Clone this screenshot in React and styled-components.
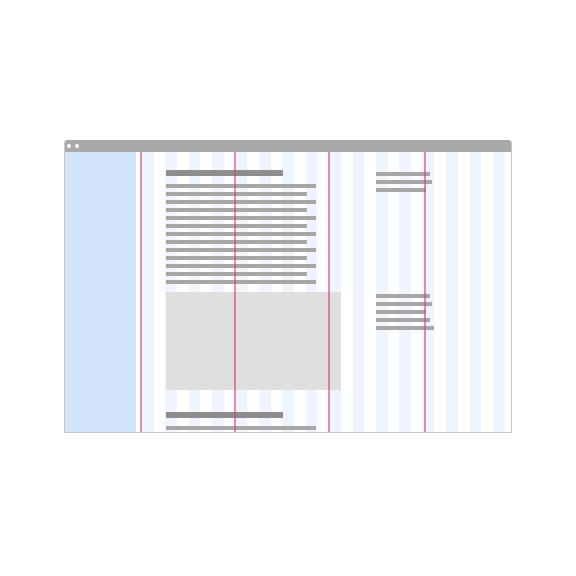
import React from 'react'
import styled, { createGlobalStyle } from 'styled-components'

const COL = 11.7

const GlobalStyle = createGlobalStyle`
html, body {
  margin: 0;
  padding: 0;
  background: #ffffff;
  font-family: "Liberation Sans", Arial, sans-serif;
}
`

const Page = styled.div`
width: 576px;
height: 576px;
display: flex;
justify-content: center;
padding-top: 140px;
box-sizing: border-box;
`

const Window = styled.div`
width: 448px;
height: 293px;
display: flex;
flex-direction: column;
border: 1px solid #c9c9c9;
border-top: none;
border-radius: 3px 3px 0 0;
box-sizing: border-box;
overflow: hidden;
`

const TitleBar = styled.div`
height: 12px;
flex: none;
background: #a9a9a9;
display: flex;
align-items: center;
gap: 4px;
padding-left: 3px;
margin: 0 -1px;
border-radius: 3px 3px 0 0;
`

const Dot = styled.span`
width: 4px;
height: 4px;
border-radius: 50%;
background: #ffffff;
`

const Body = styled.div`
flex: 1;
display: flex;
min-height: 0;
`

const Sidebar = styled.div`
width: 71px;
flex: none;
background: #d2e3fc;
`

const Canvas = styled.div`
position: relative;
flex: 1;
overflow: hidden;
background-image: repeating-linear-gradient(
  90deg,
  #eef5ff 0,
  #eef5ff ${COL}px,
  transparent ${COL}px,
  transparent ${COL * 2}px
);
background-position: 6px 0;
`

const Guides = styled.div`
position: absolute;
inset: 0 0 0 4px;
display: flex;
pointer-events: none;
`

const Guide = styled.div`
width: ${p => p.$w}px;
flex: none;
border-left: 2px solid rgba(214, 60, 130, 0.6);
box-sizing: border-box;
`

const Content = styled.div`
display: flex;
padding-left: 30px;
gap: 36px;
`

const Main = styled.div`
width: 174px;
padding-top: 18px;
display: flex;
flex-direction: column;
`

const Side = styled.div`
padding-top: 20px;
display: flex;
flex-direction: column;
`

const Heading = styled.div`
width: 117px;
height: 6px;
background: #8d8d8d;
margin-top: ${p => p.$top || 0}px;
`

const Lines = styled.div`
display: flex;
flex-direction: column;
gap: 4px;
margin-top: ${p => p.$top || 0}px;
`

const Line = styled.div`
width: ${p => p.$w}px;
height: 4px;
background: #a7a7a7;
`

const Picture = styled.div`
width: 175px;
height: 98px;
background: #dfdfdf;
margin-top: 8px;
`

const textLines = Array.from({ length: 13 }, (_, i) => (i % 2 === 0 ? 150 : 141))

export default function App() {
  return (
    <Page>
      <GlobalStyle />
      <Window>
        <TitleBar>
          <Dot />
          <Dot />
        </TitleBar>
        <Body>
          <Sidebar />
          <Canvas>
            <Content>
              <Main>
                <Heading />
                <Lines $top={8}>
                  {textLines.map((w, i) => (
                    <Line key={i} $w={w} />
                  ))}
                </Lines>
                <Picture />
                <Heading $top={22} />
                <Lines $top={8}>
                  <Line $w={150} />
                </Lines>
              </Main>
              <Side>
                <Lines>
                  <Line $w={54} />
                  <Line $w={56} />
                  <Line $w={50} />
                </Lines>
                <Lines $top={102}>
                  <Line $w={54} />
                  <Line $w={56} />
                  <Line $w={50} />
                  <Line $w={54} />
                  <Line $w={58} />
                </Lines>
              </Side>
            </Content>
            <Guides>
              <Guide $w={94} />
              <Guide $w={94} />
              <Guide $w={96} />
              <Guide $w={60} />
            </Guides>
          </Canvas>
        </Body>
      </Window>
    </Page>
  )
}
